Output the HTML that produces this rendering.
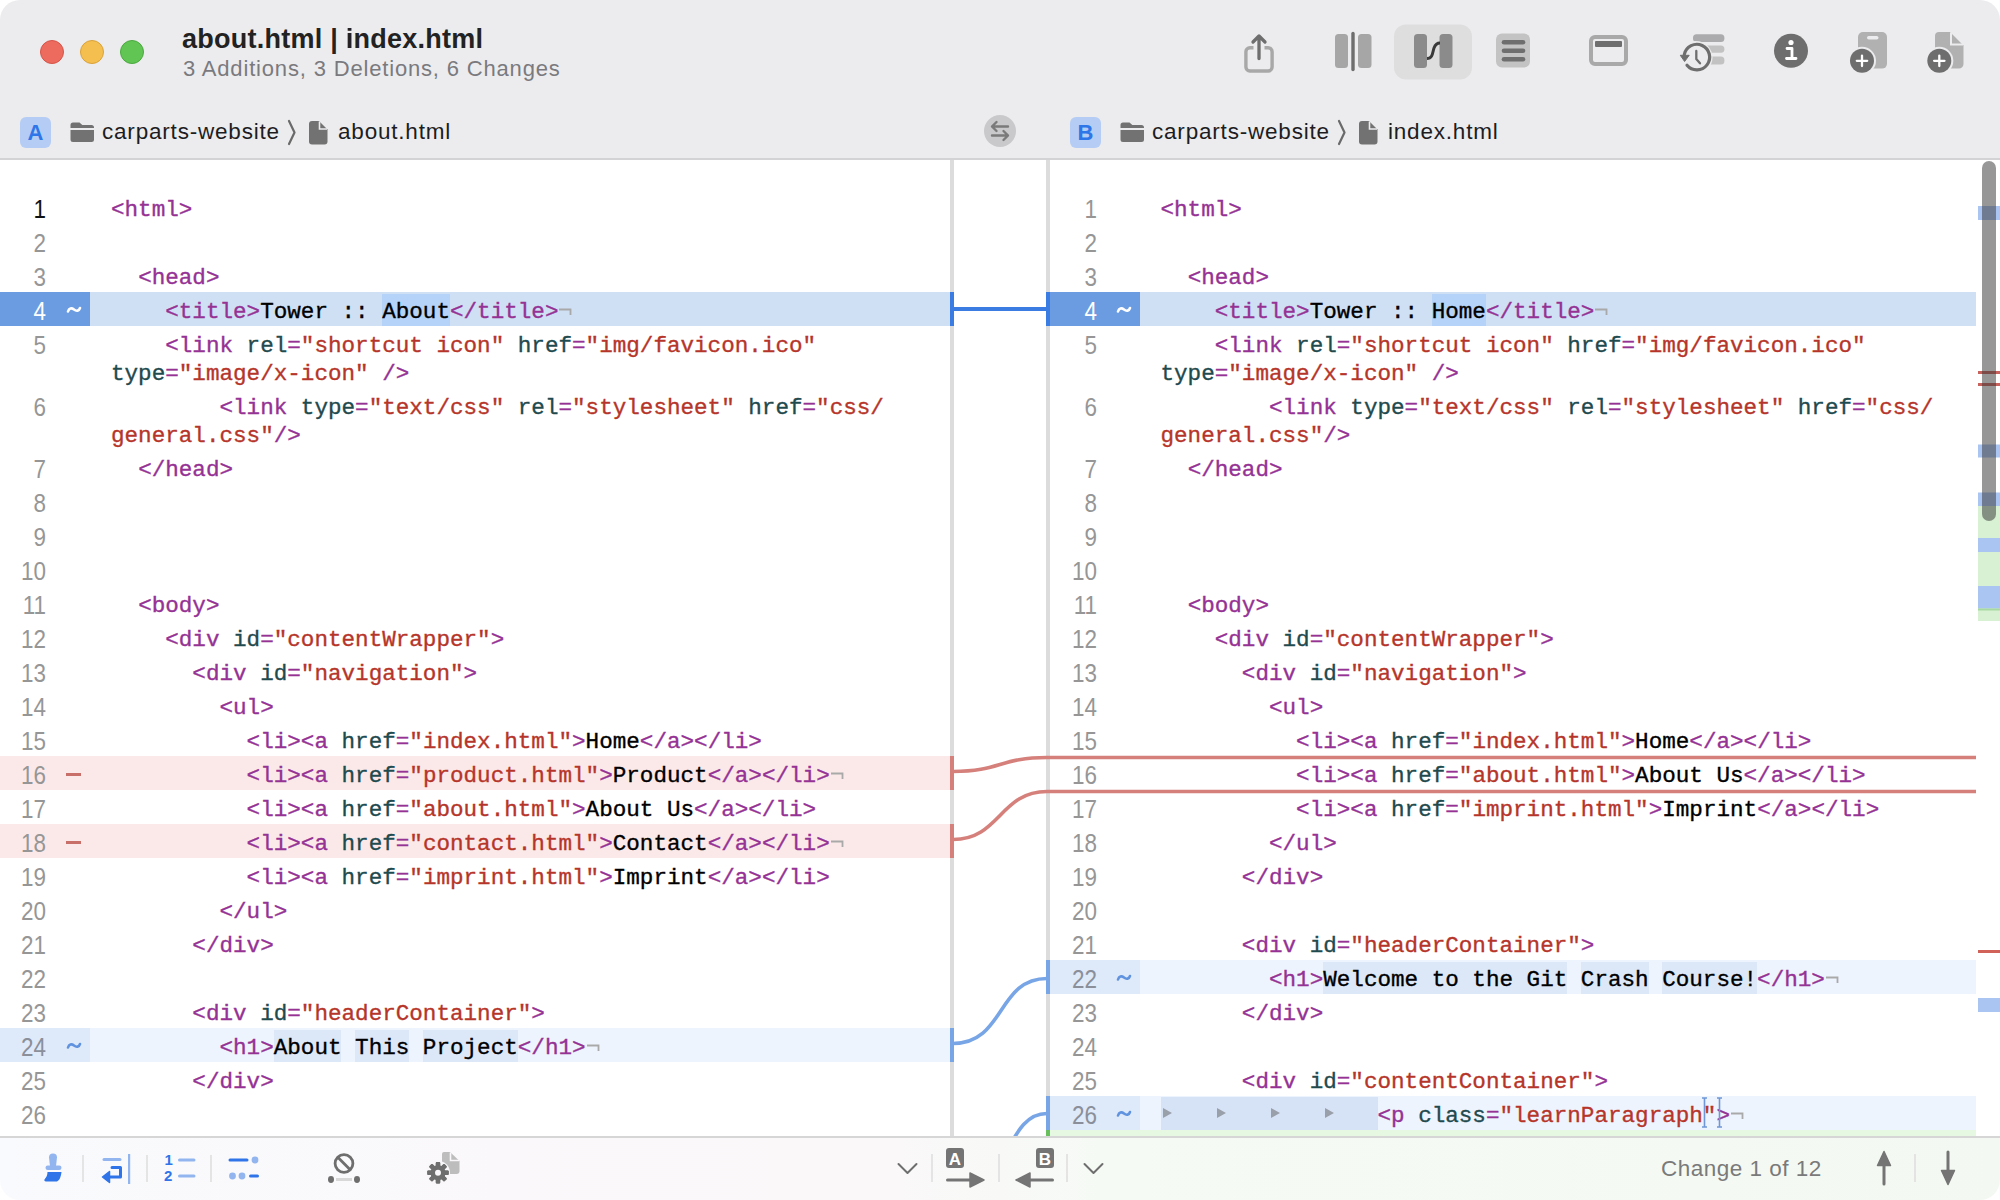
<!DOCTYPE html><html><head><meta charset="utf-8"><style>
*{margin:0;padding:0;box-sizing:border-box}
html,body{width:2000px;height:1200px;overflow:hidden;background:#fff}
body{position:relative;font-family:"Liberation Sans",sans-serif}
.bg{position:absolute}
.ln{position:absolute;text-align:right;font:25.5px/28px "Liberation Sans",sans-serif;height:28px;transform:scaleX(0.88);transform-origin:100% 50%}
.mk{position:absolute;font:bold 22px/28px "Liberation Mono",monospace;height:28px}
.code{position:absolute;font:22.60px/28px "Liberation Mono",monospace;white-space:pre;color:#000;height:28px;-webkit-text-stroke:0.35px}
.eol{display:inline-block;width:13.56px;-webkit-text-stroke:0}
.tabm{position:absolute;width:0;height:0;border-left:9px solid #9aa0aa;border-top:5px solid transparent;border-bottom:5px solid transparent}
.abs{position:absolute}
</style></head><body>
<div id="win" style="position:absolute;left:0;top:0;width:2000px;height:1200px;border-radius:20px;overflow:hidden;background:#fff">

<div class="abs" style="left:0;top:0;width:2000px;height:158px;background:#ececee"></div>
<div class="abs" style="left:0;top:158px;width:2000px;height:2px;background:#d3d3d5"></div>
<div class="abs" style="left:40px;top:40px;width:24px;height:24px;border-radius:50%;background:#ed6a5e;border:1px solid #d65448"></div>
<div class="abs" style="left:80px;top:40px;width:24px;height:24px;border-radius:50%;background:#f5bf4f;border:1px solid #d9a23a"></div>
<div class="abs" style="left:120px;top:40px;width:24px;height:24px;border-radius:50%;background:#61c554;border:1px solid #4ba93f"></div>
<div class="abs" style="left:182px;top:23px;font:bold 27px/32px 'Liberation Sans',sans-serif;color:#222;white-space:pre;letter-spacing:0.25px">about.html | index.html</div>
<div class="abs" style="left:183px;top:55px;font:22px/28px 'Liberation Sans',sans-serif;color:#7a7a7e;white-space:pre;letter-spacing:0.83px">3 Additions, 3 Deletions, 6 Changes</div>
<div class="abs" style="left:20px;top:117px;width:31px;height:31px;border-radius:6px;background:#b5cdf4;color:#2f76e8;font:bold 22px/32px 'Liberation Sans',sans-serif;text-align:center">A</div><svg class="abs" style="left:70px;top:121px" width="26" height="22" viewBox="0 0 26 22"><path d="M0.5 4 a2.5 2.5 0 0 1 2.5-2.5 h6.5 l2.8 2.5 h9.2 a2.5 2.5 0 0 1 2.5 2.5 v0.5 h-23.5z" fill="#727272"/><path d="M0.5 9 h23.5 v9.5 a2.5 2.5 0 0 1 -2.5 2.5 h-18.5 a2.5 2.5 0 0 1 -2.5-2.5z" fill="#727272"/></svg><div class="abs" style="left:102px;top:114px;font:22.5px/36px 'Liberation Sans',sans-serif;color:#1d1d1f;white-space:pre;letter-spacing:0.8px">carparts-website</div><svg class="abs" style="left:286px;top:118px" width="12" height="30" viewBox="0 0 12 30"><path d="M3 3 L8.5 14.5 L3 26" fill="none" stroke="#6a6a6a" stroke-width="2.2" stroke-linecap="round" stroke-linejoin="round"/></svg><svg class="abs" style="left:309px;top:121px" width="20" height="24" viewBox="0 0 20 24"><path d="M3 0 H10 L18.5 8.5 V20.5 a3 3 0 0 1 -3 3 H3 a3 3 0 0 1 -3-3 V3 a3 3 0 0 1 3-3z" fill="#727272"/><path d="M10.5 0.5 V8 H18" fill="none" stroke="#ececee" stroke-width="1.6"/></svg><div class="abs" style="left:338px;top:114px;font:22.5px/36px 'Liberation Sans',sans-serif;color:#1d1d1f;white-space:pre;letter-spacing:0.8px">about.html</div><div class="abs" style="left:1070px;top:117px;width:31px;height:31px;border-radius:6px;background:#b5cdf4;color:#2f76e8;font:bold 22px/32px 'Liberation Sans',sans-serif;text-align:center">B</div><svg class="abs" style="left:1120px;top:121px" width="26" height="22" viewBox="0 0 26 22"><path d="M0.5 4 a2.5 2.5 0 0 1 2.5-2.5 h6.5 l2.8 2.5 h9.2 a2.5 2.5 0 0 1 2.5 2.5 v0.5 h-23.5z" fill="#727272"/><path d="M0.5 9 h23.5 v9.5 a2.5 2.5 0 0 1 -2.5 2.5 h-18.5 a2.5 2.5 0 0 1 -2.5-2.5z" fill="#727272"/></svg><div class="abs" style="left:1152px;top:114px;font:22.5px/36px 'Liberation Sans',sans-serif;color:#1d1d1f;white-space:pre;letter-spacing:0.8px">carparts-website</div><svg class="abs" style="left:1336px;top:118px" width="12" height="30" viewBox="0 0 12 30"><path d="M3 3 L8.5 14.5 L3 26" fill="none" stroke="#6a6a6a" stroke-width="2.2" stroke-linecap="round" stroke-linejoin="round"/></svg><svg class="abs" style="left:1359px;top:121px" width="20" height="24" viewBox="0 0 20 24"><path d="M3 0 H10 L18.5 8.5 V20.5 a3 3 0 0 1 -3 3 H3 a3 3 0 0 1 -3-3 V3 a3 3 0 0 1 3-3z" fill="#727272"/><path d="M10.5 0.5 V8 H18" fill="none" stroke="#ececee" stroke-width="1.6"/></svg><div class="abs" style="left:1388px;top:114px;font:22.5px/36px 'Liberation Sans',sans-serif;color:#1d1d1f;white-space:pre;letter-spacing:0.8px">index.html</div><svg class="abs" style="left:0;top:0" width="2000" height="160" viewBox="0 0 2000 160"><path d="M1253.5 47.7 h-3.6 a4 4 0 0 0 -4 4 v15.3 a4 4 0 0 0 4 4 h18.2 a4 4 0 0 0 4 -4 v-15.3 a4 4 0 0 0 -4 -4 h-3.6" fill="none" stroke="#a8a8a8" stroke-width="3.4"/><path d="M1259 58.5 V37 M1253 42 L1259 36 L1265 42" fill="none" stroke="#6e6e6e" stroke-width="3.3" stroke-linecap="round" stroke-linejoin="round"/><rect x="1335" y="34" width="13" height="34" rx="3.5" fill="#a6a6a6"/><rect x="1358" y="34" width="13.5" height="34" rx="3.5" fill="#a6a6a6"/><path d="M1353 33.5 V69.5" stroke="#6e6e6e" stroke-width="3.4" stroke-linecap="round"/><rect x="1394" y="24.5" width="78" height="55" rx="12" fill="#dededf"/><rect x="1414" y="34" width="13" height="34" rx="3.5" fill="#8b8b8b"/><rect x="1439.5" y="34" width="13" height="34" rx="3.5" fill="#8b8b8b"/><path d="M1427 58.5 C1433 58.5 1432.5 52 1434 48 C1435.5 44 1437 43 1440 43" fill="none" stroke="#3a3a3a" stroke-width="3"/><rect x="1496" y="33.5" width="34" height="34" rx="6" fill="#c3c3c3"/><path d="M1504 42.2 H1523" stroke="#6e6e6e" stroke-width="4.6" stroke-linecap="round"/><path d="M1504 50.7 H1523" stroke="#6e6e6e" stroke-width="4.6" stroke-linecap="round"/><path d="M1504 59.2 H1523" stroke="#6e6e6e" stroke-width="4.6" stroke-linecap="round"/><rect x="1591" y="37" width="35" height="27" rx="4" fill="none" stroke="#a9a9a9" stroke-width="4"/><rect x="1595" y="41" width="27" height="6" rx="1" fill="#6e6e6e"/><rect x="1693" y="34.3" width="31.4" height="7.6" rx="3.5" fill="#ababad"/><rect x="1700" y="45.5" width="24.4" height="7.3" rx="3.5" fill="#c2c2c2"/><rect x="1700" y="56.6" width="24.4" height="7.8" rx="3.5" fill="#c2c2c2"/><circle cx="1696" cy="57.5" r="16.5" fill="#ececee"/><path d="M1684.3 54.5 A12.8 12.8 0 1 1 1687 65.3" fill="none" stroke="#6e6e6e" stroke-width="3.2" stroke-linecap="round"/><path d="M1680.3 55.3 L1689.2 55.3 L1684.6 61.5 Z" fill="#6e6e6e" stroke="#6e6e6e" stroke-width="1" stroke-linejoin="round"/><path d="M1696.3 51 V59 L1700 63.3" fill="none" stroke="#6e6e6e" stroke-width="2.3" stroke-linecap="round" stroke-linejoin="round"/><circle cx="1791" cy="50.7" r="17" fill="#6e6e6e"/><circle cx="1791" cy="42.5" r="2.6" fill="#fff"/><path d="M1787 48.5 H1792 V58.5 M1786.5 58.5 H1796" fill="none" stroke="#fff" stroke-width="2.8" stroke-linecap="round" stroke-linejoin="round"/><rect x="1858" y="32" width="29" height="36.6" rx="5" fill="#b1b1b1"/><rect x="1867" y="36" width="11.5" height="3.6" rx="1.8" fill="#ececee"/><circle cx="1862" cy="60.8" r="14" fill="#ececee"/><circle cx="1862" cy="60.8" r="12" fill="#6e6e6e"/><path d="M1862 55.6 V66 M1856.8 60.8 H1867.2" stroke="#fff" stroke-width="2.3" stroke-linecap="round"/><path d="M1939 32 H1950 L1963.5 45.5 V64 a4.6 4.6 0 0 1 -4.6 4.6 H1939 a4 4 0 0 1 -4 -4 V36 a4 4 0 0 1 4 -4 Z" fill="#b1b1b1"/><path d="M1951 32.5 V44.5 H1963" fill="none" stroke="#ececee" stroke-width="2"/><circle cx="1939.3" cy="60.8" r="14" fill="#ececee"/><circle cx="1939.3" cy="60.8" r="12" fill="#6e6e6e"/><path d="M1939.3 55.6 V66 M1934.1 60.8 H1944.5" stroke="#fff" stroke-width="2.3" stroke-linecap="round"/><circle cx="1000" cy="131" r="16" fill="#c9c9cb"/><path d="M1008 126.5 H992 M996.5 122 L992 126.5 L996.5 131 M992 135.5 H1008 M1003.5 131 L1008 135.5 L1003.5 140" fill="none" stroke="#7a7a7a" stroke-width="2.4" stroke-linecap="round" stroke-linejoin="round"/></svg>
<div class="abs" style="left:950px;top:160px;width:4px;height:976px;background:#dcdcdc"></div>
<div class="abs" style="left:1046px;top:160px;width:4px;height:976px;background:#dcdcdc"></div>
<div class="ln" style="left:0px;top:194.8px;width:46px;color:#111">1</div>
<div class="code" style="left:111.0px;top:196px"><span style="color:#953294">&lt;html</span><span style="color:#953294">&gt;</span></div>
<div class="ln" style="left:0px;top:228.8px;width:46px;color:#969696">2</div>
<div class="code" style="left:111.0px;top:230px"></div>
<div class="ln" style="left:0px;top:262.8px;width:46px;color:#969696">3</div>
<div class="code" style="left:111.0px;top:264px">  <span style="color:#953294">&lt;head</span><span style="color:#953294">&gt;</span></div>
<div class="bg" style="left:0px;top:292px;width:90px;height:34px;background:#6b9be0"></div>
<div class="bg" style="left:90px;top:292px;width:860px;height:34px;background:#cfe0f5"></div>
<div class="bg" style="left:382.2px;top:294px;width:67.8px;height:32px;background:#b5d2f8"></div>
<div class="ln" style="left:0px;top:296.8px;width:46px;color:#ffffff">4</div>
<svg class="abs" style="left:66px;top:305px" width="16" height="10" viewBox="0 0 16 10"><path d="M2 6.5 C3 3 5.5 2.5 8 4.5 C10.5 6.5 13 6 14 3" fill="none" stroke="#ffffff" stroke-width="2.6" stroke-linecap="round"/></svg>
<div class="code" style="left:111.0px;top:298px">    <span style="color:#953294">&lt;title</span><span style="color:#953294">&gt;</span>Tower :: About<span style="color:#953294">&lt;/title</span><span style="color:#953294">&gt;</span><span class="eol"><svg width="14" height="10" viewBox="0 0 14 10" style="vertical-align:0px"><path d="M1 1.5 H12.5 V7" fill="none" stroke="#a9a9a9" stroke-width="1.8"/></svg></span></div>
<div class="ln" style="left:0px;top:330.8px;width:46px;color:#969696">5</div>
<div class="code" style="left:111.0px;top:332px">    <span style="color:#953294">&lt;link</span> <span style="color:#1f4a4e">rel</span><span style="color:#953294">=</span><span style="color:#b6352a">"shortcut icon"</span> <span style="color:#1f4a4e">href</span><span style="color:#953294">=</span><span style="color:#b6352a">"img/favicon.ico"</span></div>
<div class="code" style="left:111.0px;top:360px"><span style="color:#1f4a4e">type</span><span style="color:#953294">=</span><span style="color:#b6352a">"image/x-icon"</span> <span style="color:#953294">/</span><span style="color:#953294">&gt;</span></div>
<div class="ln" style="left:0px;top:392.8px;width:46px;color:#969696">6</div>
<div class="code" style="left:111.0px;top:394px">        <span style="color:#953294">&lt;link</span> <span style="color:#1f4a4e">type</span><span style="color:#953294">=</span><span style="color:#b6352a">"text/css"</span> <span style="color:#1f4a4e">rel</span><span style="color:#953294">=</span><span style="color:#b6352a">"stylesheet"</span> <span style="color:#1f4a4e">href</span><span style="color:#953294">=</span><span style="color:#b6352a">"css/</span></div>
<div class="code" style="left:111.0px;top:422px"><span style="color:#b6352a">general.css"</span><span style="color:#953294">/</span><span style="color:#953294">&gt;</span></div>
<div class="ln" style="left:0px;top:454.8px;width:46px;color:#969696">7</div>
<div class="code" style="left:111.0px;top:456px">  <span style="color:#953294">&lt;/head</span><span style="color:#953294">&gt;</span></div>
<div class="ln" style="left:0px;top:488.8px;width:46px;color:#969696">8</div>
<div class="code" style="left:111.0px;top:490px"></div>
<div class="ln" style="left:0px;top:522.8px;width:46px;color:#969696">9</div>
<div class="code" style="left:111.0px;top:524px"></div>
<div class="ln" style="left:0px;top:556.8px;width:46px;color:#969696">10</div>
<div class="code" style="left:111.0px;top:558px"></div>
<div class="ln" style="left:0px;top:590.8px;width:46px;color:#969696">11</div>
<div class="code" style="left:111.0px;top:592px">  <span style="color:#953294">&lt;body</span><span style="color:#953294">&gt;</span></div>
<div class="ln" style="left:0px;top:624.8px;width:46px;color:#969696">12</div>
<div class="code" style="left:111.0px;top:626px">    <span style="color:#953294">&lt;div</span> <span style="color:#1f4a4e">id</span><span style="color:#953294">=</span><span style="color:#b6352a">"contentWrapper"</span><span style="color:#953294">&gt;</span></div>
<div class="ln" style="left:0px;top:658.8px;width:46px;color:#969696">13</div>
<div class="code" style="left:111.0px;top:660px">      <span style="color:#953294">&lt;div</span> <span style="color:#1f4a4e">id</span><span style="color:#953294">=</span><span style="color:#b6352a">"navigation"</span><span style="color:#953294">&gt;</span></div>
<div class="ln" style="left:0px;top:692.8px;width:46px;color:#969696">14</div>
<div class="code" style="left:111.0px;top:694px">        <span style="color:#953294">&lt;ul</span><span style="color:#953294">&gt;</span></div>
<div class="ln" style="left:0px;top:726.8px;width:46px;color:#969696">15</div>
<div class="code" style="left:111.0px;top:728px">          <span style="color:#953294">&lt;li</span><span style="color:#953294">&gt;</span><span style="color:#953294">&lt;a</span> <span style="color:#1f4a4e">href</span><span style="color:#953294">=</span><span style="color:#b6352a">"index.html"</span><span style="color:#953294">&gt;</span>Home<span style="color:#953294">&lt;/a</span><span style="color:#953294">&gt;</span><span style="color:#953294">&lt;/li</span><span style="color:#953294">&gt;</span></div>
<div class="bg" style="left:0px;top:756px;width:950px;height:34px;background:#fbe9e9"></div>
<div class="ln" style="left:0px;top:760.8px;width:46px;color:#969696">16</div>
<div class="bg" style="left:66px;top:773px;width:15px;height:3.2px;background:#c86f69"></div>
<div class="code" style="left:111.0px;top:762px">          <span style="color:#953294">&lt;li</span><span style="color:#953294">&gt;</span><span style="color:#953294">&lt;a</span> <span style="color:#1f4a4e">href</span><span style="color:#953294">=</span><span style="color:#b6352a">"product.html"</span><span style="color:#953294">&gt;</span>Product<span style="color:#953294">&lt;/a</span><span style="color:#953294">&gt;</span><span style="color:#953294">&lt;/li</span><span style="color:#953294">&gt;</span><span class="eol"><svg width="14" height="10" viewBox="0 0 14 10" style="vertical-align:0px"><path d="M1 1.5 H12.5 V7" fill="none" stroke="#a9a9a9" stroke-width="1.8"/></svg></span></div>
<div class="ln" style="left:0px;top:794.8px;width:46px;color:#969696">17</div>
<div class="code" style="left:111.0px;top:796px">          <span style="color:#953294">&lt;li</span><span style="color:#953294">&gt;</span><span style="color:#953294">&lt;a</span> <span style="color:#1f4a4e">href</span><span style="color:#953294">=</span><span style="color:#b6352a">"about.html"</span><span style="color:#953294">&gt;</span>About Us<span style="color:#953294">&lt;/a</span><span style="color:#953294">&gt;</span><span style="color:#953294">&lt;/li</span><span style="color:#953294">&gt;</span></div>
<div class="bg" style="left:0px;top:824px;width:950px;height:34px;background:#fbe9e9"></div>
<div class="ln" style="left:0px;top:828.8px;width:46px;color:#969696">18</div>
<div class="bg" style="left:66px;top:841px;width:15px;height:3.2px;background:#c86f69"></div>
<div class="code" style="left:111.0px;top:830px">          <span style="color:#953294">&lt;li</span><span style="color:#953294">&gt;</span><span style="color:#953294">&lt;a</span> <span style="color:#1f4a4e">href</span><span style="color:#953294">=</span><span style="color:#b6352a">"contact.html"</span><span style="color:#953294">&gt;</span>Contact<span style="color:#953294">&lt;/a</span><span style="color:#953294">&gt;</span><span style="color:#953294">&lt;/li</span><span style="color:#953294">&gt;</span><span class="eol"><svg width="14" height="10" viewBox="0 0 14 10" style="vertical-align:0px"><path d="M1 1.5 H12.5 V7" fill="none" stroke="#a9a9a9" stroke-width="1.8"/></svg></span></div>
<div class="ln" style="left:0px;top:862.8px;width:46px;color:#969696">19</div>
<div class="code" style="left:111.0px;top:864px">          <span style="color:#953294">&lt;li</span><span style="color:#953294">&gt;</span><span style="color:#953294">&lt;a</span> <span style="color:#1f4a4e">href</span><span style="color:#953294">=</span><span style="color:#b6352a">"imprint.html"</span><span style="color:#953294">&gt;</span>Imprint<span style="color:#953294">&lt;/a</span><span style="color:#953294">&gt;</span><span style="color:#953294">&lt;/li</span><span style="color:#953294">&gt;</span></div>
<div class="ln" style="left:0px;top:896.8px;width:46px;color:#969696">20</div>
<div class="code" style="left:111.0px;top:898px">        <span style="color:#953294">&lt;/ul</span><span style="color:#953294">&gt;</span></div>
<div class="ln" style="left:0px;top:930.8px;width:46px;color:#969696">21</div>
<div class="code" style="left:111.0px;top:932px">      <span style="color:#953294">&lt;/div</span><span style="color:#953294">&gt;</span></div>
<div class="ln" style="left:0px;top:964.8px;width:46px;color:#969696">22</div>
<div class="code" style="left:111.0px;top:966px"></div>
<div class="ln" style="left:0px;top:998.8px;width:46px;color:#969696">23</div>
<div class="code" style="left:111.0px;top:1000px">      <span style="color:#953294">&lt;div</span> <span style="color:#1f4a4e">id</span><span style="color:#953294">=</span><span style="color:#b6352a">"headerContainer"</span><span style="color:#953294">&gt;</span></div>
<div class="bg" style="left:0px;top:1028px;width:90px;height:34px;background:#dee9fa"></div>
<div class="bg" style="left:90px;top:1028px;width:860px;height:34px;background:#eef4fd"></div>
<div class="bg" style="left:273.7px;top:1030px;width:67.8px;height:32px;background:#dce7f8"></div>
<div class="bg" style="left:355.1px;top:1030px;width:54.2px;height:32px;background:#dce7f8"></div>
<div class="bg" style="left:422.9px;top:1030px;width:94.9px;height:32px;background:#dce7f8"></div>
<div class="ln" style="left:0px;top:1032.8px;width:46px;color:#8a8f99">24</div>
<svg class="abs" style="left:66px;top:1041px" width="16" height="10" viewBox="0 0 16 10"><path d="M2 6.5 C3 3 5.5 2.5 8 4.5 C10.5 6.5 13 6 14 3" fill="none" stroke="#5f93e0" stroke-width="2.6" stroke-linecap="round"/></svg>
<div class="code" style="left:111.0px;top:1034px">        <span style="color:#953294">&lt;h1</span><span style="color:#953294">&gt;</span>About This Project<span style="color:#953294">&lt;/h1</span><span style="color:#953294">&gt;</span><span class="eol"><svg width="14" height="10" viewBox="0 0 14 10" style="vertical-align:0px"><path d="M1 1.5 H12.5 V7" fill="none" stroke="#a9a9a9" stroke-width="1.8"/></svg></span></div>
<div class="ln" style="left:0px;top:1066.8px;width:46px;color:#969696">25</div>
<div class="code" style="left:111.0px;top:1068px">      <span style="color:#953294">&lt;/div</span><span style="color:#953294">&gt;</span></div>
<div class="ln" style="left:0px;top:1100.8px;width:46px;color:#969696">26</div>
<div class="code" style="left:111.0px;top:1102px"></div>
<div class="ln" style="left:0px;top:1134.8px;width:46px;color:#969696">27</div>
<div class="code" style="left:111.0px;top:1136px"></div>
<div class="ln" style="left:1050px;top:194.8px;width:47px;color:#969696">1</div>
<div class="code" style="left:1160.5px;top:196px"><span style="color:#953294">&lt;html</span><span style="color:#953294">&gt;</span></div>
<div class="ln" style="left:1050px;top:228.8px;width:47px;color:#969696">2</div>
<div class="code" style="left:1160.5px;top:230px"></div>
<div class="ln" style="left:1050px;top:262.8px;width:47px;color:#969696">3</div>
<div class="code" style="left:1160.5px;top:264px">  <span style="color:#953294">&lt;head</span><span style="color:#953294">&gt;</span></div>
<div class="bg" style="left:1050px;top:292px;width:90px;height:34px;background:#6b9be0"></div>
<div class="bg" style="left:1140px;top:292px;width:836px;height:34px;background:#cfe0f5"></div>
<div class="bg" style="left:1431.7px;top:294px;width:54.2px;height:32px;background:#b5d2f8"></div>
<div class="ln" style="left:1050px;top:296.8px;width:47px;color:#ffffff">4</div>
<svg class="abs" style="left:1116px;top:305px" width="16" height="10" viewBox="0 0 16 10"><path d="M2 6.5 C3 3 5.5 2.5 8 4.5 C10.5 6.5 13 6 14 3" fill="none" stroke="#ffffff" stroke-width="2.6" stroke-linecap="round"/></svg>
<div class="code" style="left:1160.5px;top:298px">    <span style="color:#953294">&lt;title</span><span style="color:#953294">&gt;</span>Tower :: Home<span style="color:#953294">&lt;/title</span><span style="color:#953294">&gt;</span><span class="eol"><svg width="14" height="10" viewBox="0 0 14 10" style="vertical-align:0px"><path d="M1 1.5 H12.5 V7" fill="none" stroke="#a9a9a9" stroke-width="1.8"/></svg></span></div>
<div class="ln" style="left:1050px;top:330.8px;width:47px;color:#969696">5</div>
<div class="code" style="left:1160.5px;top:332px">    <span style="color:#953294">&lt;link</span> <span style="color:#1f4a4e">rel</span><span style="color:#953294">=</span><span style="color:#b6352a">"shortcut icon"</span> <span style="color:#1f4a4e">href</span><span style="color:#953294">=</span><span style="color:#b6352a">"img/favicon.ico"</span></div>
<div class="code" style="left:1160.5px;top:360px"><span style="color:#1f4a4e">type</span><span style="color:#953294">=</span><span style="color:#b6352a">"image/x-icon"</span> <span style="color:#953294">/</span><span style="color:#953294">&gt;</span></div>
<div class="ln" style="left:1050px;top:392.8px;width:47px;color:#969696">6</div>
<div class="code" style="left:1160.5px;top:394px">        <span style="color:#953294">&lt;link</span> <span style="color:#1f4a4e">type</span><span style="color:#953294">=</span><span style="color:#b6352a">"text/css"</span> <span style="color:#1f4a4e">rel</span><span style="color:#953294">=</span><span style="color:#b6352a">"stylesheet"</span> <span style="color:#1f4a4e">href</span><span style="color:#953294">=</span><span style="color:#b6352a">"css/</span></div>
<div class="code" style="left:1160.5px;top:422px"><span style="color:#b6352a">general.css"</span><span style="color:#953294">/</span><span style="color:#953294">&gt;</span></div>
<div class="ln" style="left:1050px;top:454.8px;width:47px;color:#969696">7</div>
<div class="code" style="left:1160.5px;top:456px">  <span style="color:#953294">&lt;/head</span><span style="color:#953294">&gt;</span></div>
<div class="ln" style="left:1050px;top:488.8px;width:47px;color:#969696">8</div>
<div class="code" style="left:1160.5px;top:490px"></div>
<div class="ln" style="left:1050px;top:522.8px;width:47px;color:#969696">9</div>
<div class="code" style="left:1160.5px;top:524px"></div>
<div class="ln" style="left:1050px;top:556.8px;width:47px;color:#969696">10</div>
<div class="code" style="left:1160.5px;top:558px"></div>
<div class="ln" style="left:1050px;top:590.8px;width:47px;color:#969696">11</div>
<div class="code" style="left:1160.5px;top:592px">  <span style="color:#953294">&lt;body</span><span style="color:#953294">&gt;</span></div>
<div class="ln" style="left:1050px;top:624.8px;width:47px;color:#969696">12</div>
<div class="code" style="left:1160.5px;top:626px">    <span style="color:#953294">&lt;div</span> <span style="color:#1f4a4e">id</span><span style="color:#953294">=</span><span style="color:#b6352a">"contentWrapper"</span><span style="color:#953294">&gt;</span></div>
<div class="ln" style="left:1050px;top:658.8px;width:47px;color:#969696">13</div>
<div class="code" style="left:1160.5px;top:660px">      <span style="color:#953294">&lt;div</span> <span style="color:#1f4a4e">id</span><span style="color:#953294">=</span><span style="color:#b6352a">"navigation"</span><span style="color:#953294">&gt;</span></div>
<div class="ln" style="left:1050px;top:692.8px;width:47px;color:#969696">14</div>
<div class="code" style="left:1160.5px;top:694px">        <span style="color:#953294">&lt;ul</span><span style="color:#953294">&gt;</span></div>
<div class="ln" style="left:1050px;top:726.8px;width:47px;color:#969696">15</div>
<div class="code" style="left:1160.5px;top:728px">          <span style="color:#953294">&lt;li</span><span style="color:#953294">&gt;</span><span style="color:#953294">&lt;a</span> <span style="color:#1f4a4e">href</span><span style="color:#953294">=</span><span style="color:#b6352a">"index.html"</span><span style="color:#953294">&gt;</span>Home<span style="color:#953294">&lt;/a</span><span style="color:#953294">&gt;</span><span style="color:#953294">&lt;/li</span><span style="color:#953294">&gt;</span></div>
<div class="ln" style="left:1050px;top:760.8px;width:47px;color:#969696">16</div>
<div class="code" style="left:1160.5px;top:762px">          <span style="color:#953294">&lt;li</span><span style="color:#953294">&gt;</span><span style="color:#953294">&lt;a</span> <span style="color:#1f4a4e">href</span><span style="color:#953294">=</span><span style="color:#b6352a">"about.html"</span><span style="color:#953294">&gt;</span>About Us<span style="color:#953294">&lt;/a</span><span style="color:#953294">&gt;</span><span style="color:#953294">&lt;/li</span><span style="color:#953294">&gt;</span></div>
<div class="ln" style="left:1050px;top:794.8px;width:47px;color:#969696">17</div>
<div class="code" style="left:1160.5px;top:796px">          <span style="color:#953294">&lt;li</span><span style="color:#953294">&gt;</span><span style="color:#953294">&lt;a</span> <span style="color:#1f4a4e">href</span><span style="color:#953294">=</span><span style="color:#b6352a">"imprint.html"</span><span style="color:#953294">&gt;</span>Imprint<span style="color:#953294">&lt;/a</span><span style="color:#953294">&gt;</span><span style="color:#953294">&lt;/li</span><span style="color:#953294">&gt;</span></div>
<div class="ln" style="left:1050px;top:828.8px;width:47px;color:#969696">18</div>
<div class="code" style="left:1160.5px;top:830px">        <span style="color:#953294">&lt;/ul</span><span style="color:#953294">&gt;</span></div>
<div class="ln" style="left:1050px;top:862.8px;width:47px;color:#969696">19</div>
<div class="code" style="left:1160.5px;top:864px">      <span style="color:#953294">&lt;/div</span><span style="color:#953294">&gt;</span></div>
<div class="ln" style="left:1050px;top:896.8px;width:47px;color:#969696">20</div>
<div class="code" style="left:1160.5px;top:898px"></div>
<div class="ln" style="left:1050px;top:930.8px;width:47px;color:#969696">21</div>
<div class="code" style="left:1160.5px;top:932px">      <span style="color:#953294">&lt;div</span> <span style="color:#1f4a4e">id</span><span style="color:#953294">=</span><span style="color:#b6352a">"headerContainer"</span><span style="color:#953294">&gt;</span></div>
<div class="bg" style="left:1050px;top:960px;width:90px;height:34px;background:#dee9fa"></div>
<div class="bg" style="left:1140px;top:960px;width:836px;height:34px;background:#eef4fd"></div>
<div class="bg" style="left:1323.2px;top:962px;width:244.1px;height:32px;background:#dce7f8"></div>
<div class="bg" style="left:1580.9px;top:962px;width:67.8px;height:32px;background:#dce7f8"></div>
<div class="bg" style="left:1662.2px;top:962px;width:94.9px;height:32px;background:#dce7f8"></div>
<div class="ln" style="left:1050px;top:964.8px;width:47px;color:#8a8f99">22</div>
<svg class="abs" style="left:1116px;top:973px" width="16" height="10" viewBox="0 0 16 10"><path d="M2 6.5 C3 3 5.5 2.5 8 4.5 C10.5 6.5 13 6 14 3" fill="none" stroke="#5f93e0" stroke-width="2.6" stroke-linecap="round"/></svg>
<div class="code" style="left:1160.5px;top:966px">        <span style="color:#953294">&lt;h1</span><span style="color:#953294">&gt;</span>Welcome to the Git Crash Course!<span style="color:#953294">&lt;/h1</span><span style="color:#953294">&gt;</span><span class="eol"><svg width="14" height="10" viewBox="0 0 14 10" style="vertical-align:0px"><path d="M1 1.5 H12.5 V7" fill="none" stroke="#a9a9a9" stroke-width="1.8"/></svg></span></div>
<div class="ln" style="left:1050px;top:998.8px;width:47px;color:#969696">23</div>
<div class="code" style="left:1160.5px;top:1000px">      <span style="color:#953294">&lt;/div</span><span style="color:#953294">&gt;</span></div>
<div class="ln" style="left:1050px;top:1032.8px;width:47px;color:#969696">24</div>
<div class="code" style="left:1160.5px;top:1034px"></div>
<div class="ln" style="left:1050px;top:1066.8px;width:47px;color:#969696">25</div>
<div class="code" style="left:1160.5px;top:1068px">      <span style="color:#953294">&lt;div</span> <span style="color:#1f4a4e">id</span><span style="color:#953294">=</span><span style="color:#b6352a">"contentContainer"</span><span style="color:#953294">&gt;</span></div>
<div class="bg" style="left:1050px;top:1096px;width:90px;height:34px;background:#dee9fa"></div>
<div class="bg" style="left:1140px;top:1096px;width:836px;height:34px;background:#eef4fd"></div>
<div class="ln" style="left:1050px;top:1100.8px;width:47px;color:#8a8f99">26</div>
<svg class="abs" style="left:1116px;top:1109px" width="16" height="10" viewBox="0 0 16 10"><path d="M2 6.5 C3 3 5.5 2.5 8 4.5 C10.5 6.5 13 6 14 3" fill="none" stroke="#5f93e0" stroke-width="2.6" stroke-linecap="round"/></svg>
<div class="bg" style="left:1160.5px;top:1097px;width:217.0px;height:33px;background:#d6e3f7"></div>
<div class="tabm" style="left:1162.5px;top:1108px"></div>
<div class="tabm" style="left:1216.7px;top:1108px"></div>
<div class="tabm" style="left:1271.0px;top:1108px"></div>
<div class="tabm" style="left:1325.2px;top:1108px"></div>
<div class="code" style="left:1160.5px;top:1102px">                <span style="color:#953294">&lt;p</span> <span style="color:#1f4a4e">class</span><span style="color:#953294">=</span><span style="color:#b6352a">"learnParagraph"</span><span style="color:#953294">&gt;</span><span class="eol"><svg width="14" height="10" viewBox="0 0 14 10" style="vertical-align:0px"><path d="M1 1.5 H12.5 V7" fill="none" stroke="#a9a9a9" stroke-width="1.8"/></svg></span></div>
<div class="bg" style="left:1050px;top:1130px;width:926px;height:34px;background:#e6f8e2"></div>
<div class="ln" style="left:1050px;top:1134.8px;width:47px;color:#969696">27</div>
<div class="code" style="left:1160.5px;top:1136px"></div>
<svg class="abs" style="left:0;top:160px" width="2000" height="976" viewBox="0 160 2000 976"><rect x="950" y="292" width="4" height="34" fill="#3a7ce2"/><rect x="1046" y="292" width="4" height="34" fill="#3a7ce2"/><rect x="954" y="307" width="92" height="4" fill="#3a7ce2"/><rect x="950" y="756" width="4" height="34" fill="#d5807b"/><rect x="950" y="824" width="4" height="34" fill="#d5807b"/><path d="M953 771.5 C1000 771.5 1000 757.5 1047 757.5 H1976" fill="none" stroke="#d5807b" stroke-width="3.6"/><path d="M953 839.5 C1000 839.5 1000 791.5 1047 791.5 H1976" fill="none" stroke="#d5807b" stroke-width="3.6"/><rect x="950" y="1028" width="4" height="34" fill="#78a5e6"/><rect x="1046" y="960" width="4" height="34" fill="#78a5e6"/><path d="M953 1043.5 C1005 1043.5 997 978.5 1047 978.5" fill="none" stroke="#78a5e6" stroke-width="3.6"/><rect x="1046" y="1096" width="4" height="34" fill="#78a5e6"/><path d="M1047 1113.5 C1005 1113.5 1010 1190 953 1200" fill="none" stroke="#78a5e6" stroke-width="3.6"/><rect x="1046" y="1130" width="4" height="6" fill="#69bf5e"/><path d="M1704.5 1098 V1127 M1702.0 1098 H1707.0 M1702.0 1127 H1707.0" fill="none" stroke="#6f96d6" stroke-width="1.6"/><path d="M1719.5 1098 V1127 M1717.0 1098 H1722.0 M1717.0 1127 H1722.0" fill="none" stroke="#6f96d6" stroke-width="1.6"/><rect x="1978" y="206.0" width="22" height="14.0" fill="#aac5f1"/><rect x="1978" y="371.0" width="22" height="3.0" fill="#c9625c"/><rect x="1978" y="383.0" width="22" height="3.0" fill="#c9625c"/><rect x="1978" y="444.5" width="22" height="13.0" fill="#aac5f1"/><rect x="1978" y="492.5" width="22" height="13.5" fill="#aac5f1"/><rect x="1978" y="506.0" width="22" height="115.0" fill="#d7f1d2"/><rect x="1978" y="538.0" width="22" height="14.0" fill="#aac5f1"/><rect x="1978" y="586.0" width="22" height="22.5" fill="#aac5f1"/><rect x="1978" y="608.5" width="22" height="2.0" fill="#a9d9a2"/><rect x="1978" y="950.0" width="22" height="3.0" fill="#d0625a"/><rect x="1978" y="998.0" width="22" height="14.0" fill="#aac5f1"/><rect x="1982" y="161" width="14" height="360" rx="7" fill="rgba(55,55,55,0.52)"/></svg>
<div class="abs" style="left:0;top:1136px;width:2000px;height:2px;background:#d6d6d6"></div>
<div class="abs" style="left:0;top:1138px;width:2000px;height:62px;background:linear-gradient(90deg,#f9fafd 0%,#faf8fa 25%,#faf8f9 45%,#f6faf5 55%,#f3f9f2 100%)"></div>
<svg class="abs" style="left:0;top:1138px" width="2000" height="62" viewBox="0 1138 2000 62"><path d="M49 1157.5 a4 4 0 0 1 8 0 L56 1166 H50 Z" fill="#92b5ef"/><rect x="45.5" y="1165.5" width="16" height="4.6" rx="2.3" fill="#92b5ef"/><path d="M47.5 1172 H61.5 C61 1176 60 1180 57 1181.5 H46 C44.5 1181.5 43.8 1180 44.8 1179 C46.5 1177 47.5 1175 47.5 1172 Z" fill="#2f74e8"/><rect x="82.3" y="1155" width="1.4" height="27" fill="#dcdcdc"/><rect x="146.3" y="1155" width="1.4" height="27" fill="#dcdcdc"/><rect x="210.3" y="1155" width="1.4" height="27" fill="#dcdcdc"/><path d="M104 1159.5 H120" stroke="#92b5ef" stroke-width="3" stroke-linecap="round"/><path d="M109 1177 H120.5 V1167.5 H112" fill="none" stroke="#2f74e8" stroke-width="3" stroke-linejoin="round" stroke-linecap="round"/><path d="M102.5 1177 L109.5 1171.5 V1182.5 Z" fill="#2f74e8" stroke="#2f74e8" stroke-width="1.5" stroke-linejoin="round"/><rect x="128" y="1154" width="2.2" height="30" fill="#92b5ef"/><text x="164.5" y="1164.5" font-family="Liberation Sans" font-weight="bold" font-size="15" fill="#2f74e8">1</text><text x="164" y="1181" font-family="Liberation Sans" font-weight="bold" font-size="15" fill="#2f74e8">2</text><path d="M179.5 1160 H194 M179.5 1176 H194" stroke="#92b5ef" stroke-width="3" stroke-linecap="round"/><path d="M230 1160 H247" stroke="#2f74e8" stroke-width="3" stroke-linecap="round"/><circle cx="255" cy="1160" r="3.4" fill="#92b5ef"/><circle cx="232.5" cy="1176" r="3.4" fill="#92b5ef"/><circle cx="242" cy="1176" r="3.4" fill="#92b5ef"/><path d="M250.5 1176 H257.5" stroke="#2f74e8" stroke-width="3" stroke-linecap="round"/><circle cx="344" cy="1163.5" r="8.9" fill="none" stroke="#6e6e6e" stroke-width="2.8"/><path d="M337.8 1157.3 L350.2 1169.7" stroke="#6e6e6e" stroke-width="2.8"/><path d="M336 1179.5 H352" stroke="#d8d8d8" stroke-width="3"/><ellipse cx="331" cy="1179.5" rx="3" ry="3.4" fill="#6e6e6e"/><ellipse cx="357" cy="1179.5" rx="3" ry="3.4" fill="#6e6e6e"/><path d="M444 1152 H450 L459.5 1161 V1171 a3 3 0 0 1 -3 3 H444 a2 2 0 0 1 -2 -2 V1154 a2 2 0 0 1 2 -2Z" fill="#bdbdbd"/><path d="M450.5 1152.5 V1160.5 H459" fill="none" stroke="#f9f7f9" stroke-width="1.6"/><circle cx="438" cy="1172.7" r="12" fill="#f9f7f9"/><rect x="435.8" y="1162" width="4.4" height="21.4" rx="1" fill="#6e6e6e" transform="rotate(0 438 1172.7)"/><rect x="435.8" y="1162" width="4.4" height="21.4" rx="1" fill="#6e6e6e" transform="rotate(45 438 1172.7)"/><rect x="435.8" y="1162" width="4.4" height="21.4" rx="1" fill="#6e6e6e" transform="rotate(90 438 1172.7)"/><rect x="435.8" y="1162" width="4.4" height="21.4" rx="1" fill="#6e6e6e" transform="rotate(135 438 1172.7)"/><rect x="435.8" y="1162" width="4.4" height="21.4" rx="1" fill="#6e6e6e" transform="rotate(180 438 1172.7)"/><rect x="435.8" y="1162" width="4.4" height="21.4" rx="1" fill="#6e6e6e" transform="rotate(225 438 1172.7)"/><rect x="435.8" y="1162" width="4.4" height="21.4" rx="1" fill="#6e6e6e" transform="rotate(270 438 1172.7)"/><rect x="435.8" y="1162" width="4.4" height="21.4" rx="1" fill="#6e6e6e" transform="rotate(315 438 1172.7)"/><circle cx="438" cy="1172.7" r="7.5" fill="#6e6e6e"/><circle cx="438" cy="1172.7" r="3" fill="#f9f7f9"/><path d="M898.5 1164 L907.5 1173 L916.5 1164" fill="none" stroke="#6e6e6e" stroke-width="2" stroke-linecap="round" stroke-linejoin="round"/><path d="M1084.5 1164 L1093.5 1173 L1102.5 1164" fill="none" stroke="#6e6e6e" stroke-width="2" stroke-linecap="round" stroke-linejoin="round"/><rect x="931.3" y="1154" width="1.4" height="28" fill="#dcdcdc"/><rect x="998.3" y="1154" width="1.4" height="28" fill="#dcdcdc"/><rect x="1066.3" y="1154" width="1.4" height="28" fill="#dcdcdc"/><rect x="946" y="1148" width="18" height="20" rx="3" fill="#747474"/><text x="955" y="1164.5" text-anchor="middle" font-family="Liberation Sans" font-weight="bold" font-size="17" fill="#fff">A</text><path d="M947.5 1180 H972" stroke="#747474" stroke-width="3" stroke-linecap="round"/><path d="M970 1173 L984 1180 L970 1187 Z" fill="#747474" stroke="#747474" stroke-width="1.5" stroke-linejoin="round"/><rect x="1036" y="1148" width="18" height="20" rx="3" fill="#747474"/><text x="1045" y="1164.5" text-anchor="middle" font-family="Liberation Sans" font-weight="bold" font-size="17" fill="#fff">B</text><path d="M1028 1180 H1052.5" stroke="#747474" stroke-width="3" stroke-linecap="round"/><path d="M1030 1173 L1016 1180 L1030 1187 Z" fill="#747474" stroke="#747474" stroke-width="1.5" stroke-linejoin="round"/><text x="1661" y="1176" font-family="Liberation Sans" font-size="22.5" letter-spacing="0.5" fill="#7a7a7a">Change 1 of 12</text><path d="M1884 1163 V1184" stroke="#747474" stroke-width="3" stroke-linecap="round"/><path d="M1877.5 1165.5 L1884 1151.5 L1890.5 1165.5 Z" fill="#747474" stroke="#747474" stroke-width="1.5" stroke-linejoin="round"/><rect x="1914.3" y="1154" width="1.4" height="28" fill="#dcdcdc"/><path d="M1948 1152 V1172" stroke="#747474" stroke-width="3" stroke-linecap="round"/><path d="M1941.5 1170.5 L1948 1184.5 L1954.5 1170.5 Z" fill="#747474" stroke="#747474" stroke-width="1.5" stroke-linejoin="round"/></svg>
</div>
</body></html>
